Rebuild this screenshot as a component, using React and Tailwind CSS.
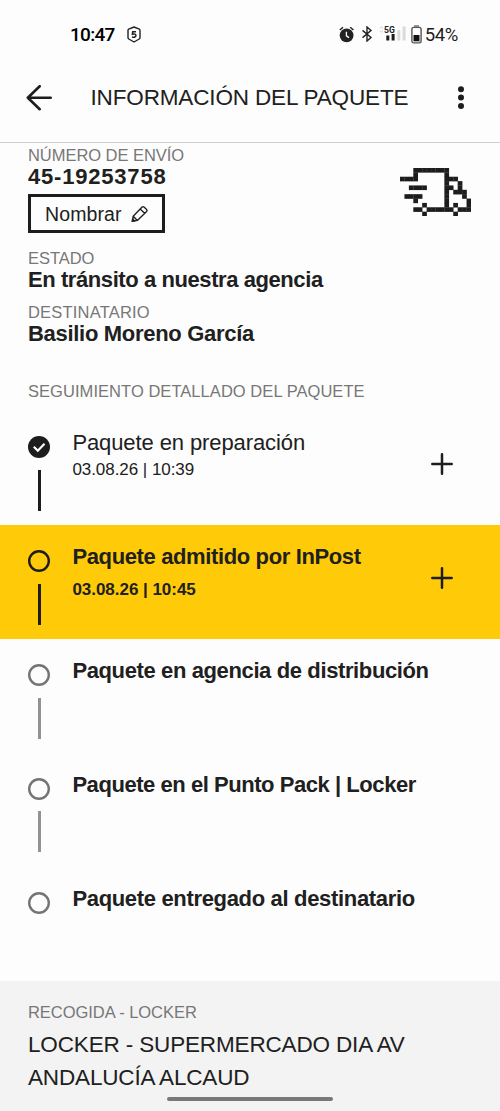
const TRUCK = [
  '...########.....',
  '...#......#.....',
  '####......###...',
  '..........#..#..',
  '..####....##.#..',
  '..........#.###.',
  '.####.....#...#.',
  '...#......#....#',
  '.....#....#.#..#',
  '...##.######.###',
  '.....#......#...',
];

function TruckIcon() {
  return (
    <svg className="h-12 w-[71px]" viewBox="0 0 160 110" preserveAspectRatio="none" fill="#1d1d1d">
      {TRUCK.flatMap((row, y) =>
        [...row].map((c, x) =>
          c === '#' ? <rect key={`${x}-${y}`} x={x * 10} y={y * 10} width="10.6" height="10.6" /> : null
        )
      )}
    </svg>
  );
}

function StatusBar() {
  return (
    <div className="flex h-[68px] items-center pl-[70px] pr-[42px] font-[Roboto,sans-serif] text-[#1d1d1d]">
      <span className="pt-px text-[19px] font-medium leading-6 tracking-[-0.7px] text-black">10:47</span>
      <svg className="ml-3 h-[17px] w-[14px]" viewBox="0 0 14 17" fill="none" stroke="#222" strokeWidth="1.4">
        <path d="M7 1 12.3 3.2Q13 3.6 13 4.4V11.4Q13 12.4 12.2 13L7 16 1.8 13Q1 12.4 1 11.4V4.4Q1 3.6 1.7 3.2Z" strokeLinejoin="round" />
        <path d="M9 5.7H5.7L5.4 8.2Q8.9 7.4 8.9 9.6 8.7 11.8 5 10.9" strokeWidth="1.5" />
      </svg>
      <div className="ml-auto flex items-center">
        <svg className="h-[17px] w-4" viewBox="0 0 16 17">
          <circle cx="7.6" cy="9.3" r="6.9" fill="#222" />
          <path d="M.8 4 4 1.2M14.4 4 11.2 1.2" stroke="#222" strokeWidth="1.5" />
          <path d="M7.4 5.8V9.8L10 11.6" fill="none" stroke="#fff" strokeWidth="1.3" />
        </svg>
        <svg className="ml-[7px] h-4 w-[11px]" viewBox="0 0 11 16" fill="none" stroke="#222" strokeWidth="1.4">
          <path d="M.5 4.4 9 11.5 5 15V1L9 4.5 .5 11.6" />
        </svg>
        <svg className="ml-[6px] h-[18px] w-[28px]" viewBox="0 0 28 18">
          <path d="M.8 3.4 2.4 1.8 4 3.4M.8 5.6 2.4 7.2 4 5.6" fill="none" stroke="#ccc" />
          <text x="5" y="7.6" fontFamily="Roboto" fontWeight="700" fontSize="8.6" fill="#222">5G</text>
          <path d="M7.3 10.4h3v5.2h-3zM12.6 9h3v6.6h-3z" fill="#1d1d1d" />
          <path d="M18.3 5.2h3v10.4h-3zM23.6 1.6h3v14h-3z" fill="#dadada" />
        </svg>
        <svg className="ml-[4px] h-[19px] w-[11px]" viewBox="0 0 11 19">
          <path d="M3 1h5" stroke="#777" strokeWidth="1.5" />
          <rect x=".9" y="2.4" width="9.2" height="15.5" rx="1.8" fill="none" stroke="#555" strokeWidth="1.4" />
          <path d="M2.5 10h6v6.3h-6z" fill="#111" />
        </svg>
        <span className="ml-[3px] pt-px text-[18.5px] leading-6 tracking-[-0.4px]">54%</span>
      </div>
    </div>
  );
}

function Header() {
  return (
    <header className="flex h-[75px] items-center border-b-[1.5px] border-[#d0d0d0] pb-[15px] pl-[26px] pr-[35px]">
      <svg className="h-[26px] w-[26px]" viewBox="0 0 26 26" fill="none" stroke="#1d1d1d" strokeWidth="2.6" strokeLinecap="round" strokeLinejoin="round">
        <path d="M24.7 12.7H1.8M13.7 1.2 1.8 12.7 13.7 24.2" />
      </svg>
      <h1 className="ml-[38.5px] whitespace-nowrap text-[22.5px] leading-7 tracking-[-0.15px]">INFORMACIÓN DEL PAQUETE</h1>
      <svg className="ml-auto h-6 w-2" viewBox="0 0 8 24" fill="#1d1d1d">
        <circle cx="4" cy="3.3" r="3" />
        <circle cx="4" cy="11.6" r="3" />
        <circle cx="4" cy="19.9" r="3" />
      </svg>
    </header>
  );
}

function Label({ children, tracking = 'tracking-[-0.05px]' }) {
  return <div className={`whitespace-nowrap text-[16.5px] leading-5 text-[#777] ${tracking}`}>{children}</div>;
}

function StepMark({ state }) {
  const tone = state === 'pending' ? '#747474' : '#1d1d1d';
  return (
    <svg className="h-[22px] w-[22px]" viewBox="0 0 22 22" fill="none">
      {state === 'done' ? (
        <>
          <circle cx="11" cy="11" r="11" fill={tone} />
          <path d="m5.8 10.8 4 3.9 6.7-7" stroke="#fff" strokeWidth="2.2" />
        </>
      ) : (
        <circle cx="11" cy="11" r="9.8" stroke={tone} strokeWidth="2.4" />
      )}
    </svg>
  );
}

const STEPS = [
  { title: 'Paquete en preparación', date: '03.08.26 | 10:39', state: 'done', type: 'tracking-[-0.1px]', dateType: 'mt-0 tracking-[-0.05px]' },
  { title: 'Paquete admitido por InPost', date: '03.08.26 | 10:45', state: 'current', type: 'font-bold tracking-[-0.37px]', dateType: 'mt-[6px] font-bold tracking-[-0.03px]' },
  { title: 'Paquete en agencia de distribución', state: 'pending', type: 'font-bold tracking-[-0.38px]' },
  { title: 'Paquete en el Punto Pack | Locker', state: 'pending', type: 'font-bold tracking-[-0.45px]' },
  { title: 'Paquete entregado al destinatario', state: 'pending', type: 'font-bold tracking-[-0.33px]' },
];

function Step({ step, last }) {
  return (
    <li className={`flex h-[113.9px] pl-7 pr-[47.5px] ${step.state === 'current' ? 'bg-[#ffcb08]' : ''}`}>
      <div className="flex w-[22px] flex-col items-center pt-[25px]">
        <StepMark state={step.state} />
        {!last && <div className={`mt-[11.5px] h-[41px] w-[3px] ${step.state === 'pending' ? 'bg-[#929292]' : 'bg-[#1d1d1d]'}`} />}
      </div>
      <div className="ml-[22.4px] flex-1 whitespace-nowrap pt-[18px]">
        <div className={`text-[22px] leading-7 ${step.type}`}>{step.title}</div>
        {step.date && <div className={`text-[17px] leading-[26px] ${step.dateType}`}>{step.date}</div>}
      </div>
      {step.date && (
        <svg className="mt-[42px] h-[22px] w-[22px]" viewBox="0 0 22 22" stroke="#1d1d1d" strokeWidth="2.5" strokeLinecap="round">
          <path d="M11 1.3V20.7M1.3 11H20.7" />
        </svg>
      )}
    </li>
  );
}

export default function App() {
  return (
    <div className="flex h-[1111px] w-[500px] flex-col overflow-hidden bg-[#fdfdfd] font-['Liberation_Sans',sans-serif] text-[#202020]">
      <StatusBar />
      <Header />
      <section className="flex h-[268.3px] justify-between pl-7 pr-[29px]">
        <div className="pt-[2px]">
          <Label>NÚMERO DE ENVÍO</Label>
          <div className="mt-[-1px] text-[22px] font-bold leading-[26px] tracking-[0.8px]">45-19253758</div>
          <button className="mt-1 flex h-[39px] w-[136.5px] items-center border-[3px] border-[#1d1d1d] pl-[14px]">
            <span className="text-[19.5px] leading-6 tracking-[0.1px]">Nombrar</span>
            <svg className="ml-[9px] h-[18px] w-[18px]" viewBox="0 0 18 18" fill="none" stroke="#222" strokeWidth="1.4" strokeLinejoin="round">
              <path d="M1.4 16.2 2.2 11.2 11.1 2.1Q12 1.2 13 2.1L15.6 4.6Q16.5 5.5 15.6 6.4L6.4 15.4ZM9.2 4.1 13.6 8.3M2.2 11.2 6.4 15.4" />
              <path d="m1.2 16.4.5-2.4 1.9 1.9z" fill="#222" />
            </svg>
          </button>
          <div className="mt-[15px]">
            <Label>ESTADO</Label>
            <div className="whitespace-nowrap text-[22px] font-bold leading-6 tracking-[-0.42px]">En tránsito a nuestra agencia</div>
          </div>
          <div className="mt-[10px]">
            <Label tracking="tracking-[0.2px]">DESTINATARIO</Label>
            <div className="whitespace-nowrap text-[22px] font-bold leading-6 tracking-[-0.3px]">Basilio Moreno García</div>
          </div>
          <div className="mt-[35px]">
            <Label tracking="tracking-[0.05px]">SEGUIMIENTO DETALLADO DEL PAQUETE</Label>
          </div>
        </div>
        <div className="pt-[25px]">
          <TruckIcon />
        </div>
      </section>
      <ol>
        {STEPS.map((step, i) => (
          <Step key={step.title} step={step} last={i === STEPS.length - 1} />
        ))}
      </ol>
      <footer className="relative flex-1 bg-[#f3f3f3] pl-7 pt-[21px]">
        <Label>RECOGIDA - LOCKER</Label>
        <p className="mt-[6px] whitespace-nowrap text-[22.5px] leading-[33px] tracking-[-0.15px]">
          LOCKER - SUPERMERCADO DIA AV
          <br />
          ANDALUCÍA ALCAUD
        </p>
        <div className="absolute bottom-[10px] left-[167px] h-1 w-[166px] rounded-full bg-[#787878]" />
      </footer>
    </div>
  );
}
